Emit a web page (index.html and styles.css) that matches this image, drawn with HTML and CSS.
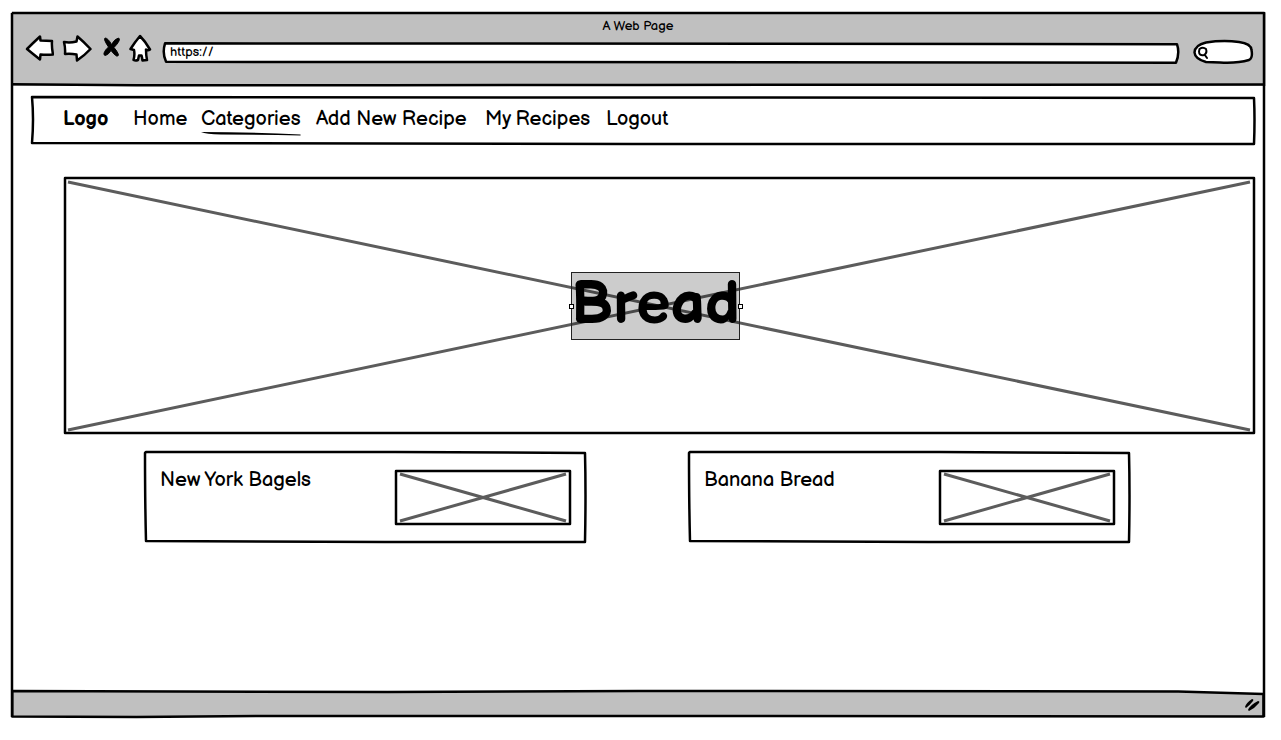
FILE: index.html
```html
<!DOCTYPE html>
<html lang="en">
<head>
<meta charset="utf-8">
<meta name="viewport" content="width=device-width, initial-scale=1">
<title>A Web Page</title>
<link rel="stylesheet" href="styles.css">
</head>
<body>
<div class="browser">
  <header class="chrome">
    <svg class="sketch" viewBox="0 0 1000 100" preserveAspectRatio="none" aria-hidden="true"><path d="M1 97.500 L100 99 L300 99 L500 98.500 L998 98"/></svg>
    <p class="chrome-title">A Web Page</p>
    <div class="toolbar">
      <button class="tool" type="button" aria-label="Back">
        <svg width="29" height="30" viewBox="0 0 29 30"><path d="M2 15 Q8 9 15 2.500 L15.500 6.500 L27 7 Q26.500 13 28 20.500 Q22 21 15.500 20.500 L15 25.500 Q8 20 2 15Z"/></svg>
      </button>
      <button class="tool" type="button" aria-label="Forward">
        <svg width="30" height="30" viewBox="0 0 30 30"><path d="M2 8 Q8 9 14.500 7.500 L15.500 2.500 Q22 8 28.500 15 Q23 21 15 26.500 L14.500 20.500 Q9 19.500 3 20 Q3.500 14 2 8Z"/></svg>
      </button>
      <button class="tool" type="button" aria-label="Stop">
        <svg width="21" height="30" viewBox="0 0 21 30"><path class="solid" d="M5 4 Q8 4 11.500 10.500 Q14.500 5 18.500 4 Q20 4.500 19 7 Q17.500 10 14 13.500 Q17 17 18.500 20.500 Q18.500 22.500 16.500 22 Q14 20.500 11 16.500 Q8.500 20.500 5.500 21.500 Q3.500 21.500 4 19 Q5 16 8.500 13 Q5 8 4.500 5.500Z"/></svg>
      </button>
      <button class="tool" type="button" aria-label="Home">
        <svg width="26" height="30" viewBox="0 0 26 30"><path d="M11 2 Q16 7 21 15.500 Q19 17 17 15.500 Q17 21 18 26 L13.500 26.500 Q13 23 12.500 21.500 L10 21.500 L9 26 Q6.500 27 4.500 26 Q6 21 5 16 L1.500 15 Q6 8 11 2Z"/></svg>
      </button>
      <div class="address">
        <svg class="sketch filled" viewBox="0 0 1000 100" preserveAspectRatio="none" aria-hidden="true"><path d="M2 6 L998 10 Q1001 50 997 94 L3 90 Q-1 50 2 6Z"/></svg>
        <input class="field" type="text" value="https://" aria-label="Address">
      </div>
      <div class="search">
        <svg class="search-shape" viewBox="0 0 61 26" aria-hidden="true"><path class="pill" d="M13 3.500 Q30 1 46 3 Q58 4.500 58.500 11 Q60 19 56 21 Q44 24.500 27 23.500 L13 23 Q2 20 1.500 13.500 Q2 6 13 3.500Z"/><path class="lens" d="M6.500 10 Q10 7.500 13 10 Q14.500 14 11 16 Q6 17 6 12.500Z M11.500 15.500 L14 19"/></svg>
        <input class="field" type="search" aria-label="Search">
      </div>
    </div>
  </header>

  <main class="page">
    <nav class="nav" aria-label="Main">
      <svg class="sketch" viewBox="0 0 1222 48" preserveAspectRatio="none" aria-hidden="true"><path d="M0 0 L1221 1 Q1222 22 1221 47 L600 47 L0 46 Q2 22 0 0Z"/></svg>
      <a class="logo" href="#">Logo</a>
      <a href="#">Home</a>
      <a class="current" href="#" aria-current="page">Categories<svg class="underline" viewBox="0 0 100 4" preserveAspectRatio="none" aria-hidden="true"><path d="M0 0 Q50 0 100 2.500 L100 3.500 Q60 2.500 20 2.500 Q5 2 0 0Z"/></svg></a>
      <a href="#">Add New Recipe</a>
      <a href="#">My Recipes</a>
      <a href="#">Logout</a>
    </nav>

    <section class="hero">
      <svg class="sketch" viewBox="0 0 1191 256" preserveAspectRatio="none" aria-hidden="true"><path class="cross" d="M4 4 L1186 252 M4 252 L1186 4"/><path d="M1 0 L1190 0 L1190 255 L1 255Z"/></svg>
      <div class="hero-label">
        <h1>Bread</h1>
        <span class="handle handle-left"></span>
        <span class="handle handle-right"></span>
      </div>
    </section>

    <section class="cards" aria-label="Recipes">
      <article class="card">
        <svg class="sketch" viewBox="0 0 441 91" preserveAspectRatio="none" aria-hidden="true"><path d="M1 0 L250 0 L440 1 Q441 40 440 90 L240 90 L1 89 Q0 50 0 1Z"/></svg>
        <h2>New York Bagels</h2>
        <div class="thumb"><svg class="sketch" viewBox="0 0 176 55" preserveAspectRatio="none" aria-hidden="true"><path class="cross" d="M5 4 L171 51 M5 51 L171 4"/><path d="M1 1 L175 1 L175 54 L1 54Z"/></svg></div>
      </article>
      <article class="card">
        <svg class="sketch" viewBox="0 0 441 91" preserveAspectRatio="none" aria-hidden="true"><path d="M1 0 L250 0 L440 1 Q441 40 440 90 L240 90 L1 89 Q0 50 0 1Z"/></svg>
        <h2>Banana Bread</h2>
        <div class="thumb"><svg class="sketch" viewBox="0 0 176 55" preserveAspectRatio="none" aria-hidden="true"><path class="cross" d="M5 4 L171 51 M5 51 L171 4"/><path d="M1 1 L175 1 L175 54 L1 54Z"/></svg></div>
      </article>
    </section>
  </main>

  <footer class="status">
    <svg class="sketch filled-grey" viewBox="0 0 1000 28" preserveAspectRatio="none" aria-hidden="true"><path d="M1 1 L300 2 L500 1 L930 1.500 L998 4 L998 26.500 L500 26 L200 26 L100 27 L1 26.500Z"/></svg>
    <svg class="grip" width="18" height="16" viewBox="0 0 18 16" aria-hidden="true"><path d="M2 11 Q3 7 9 3 Q11 3 10 5 Q6 10 3 12Z M5 14 Q7 9 15 5 Q17 5 16 7 Q12 12 6 15Z"/></svg>
  </footer>
  <svg class="sketch" viewBox="0 0 1255 706" preserveAspectRatio="none" aria-hidden="true"><path d="M1 1 L1253 1 L1253 300 L1253 705 M1 1 L1 300 L1 705"/></svg>
</div>
</body>
</html>
```
FILE: styles.css
```css
* {
  box-sizing: border-box;
}

body {
  margin: 0;
  background: #fff;
  color: #000;
  font-family: "Balsamiq Sans", "Liberation Sans", Arial, sans-serif;
  font-size: 20px;
  line-height: 24px;
}

h1, h2, p {
  margin: 0;
}

a {
  color: inherit;
  text-decoration: none;
}

/* Browser window */
.browser {
  position: relative;
  display: flex;
  flex-direction: column;
  min-height: calc(100vh - 34px);
  margin: 12px 15px 22px 11px;
}

.chrome {
  position: relative;
  padding: 6px 12px 18px 14px;
  background: #c0c0c0;
}

.chrome-title {
  padding-right: 3px;
  font-size: 13px;
  line-height: 16px;
  text-align: center;
}

.toolbar {
  display: flex;
  align-items: center;
  gap: 8px;
  height: 34px;
}

.tool {
  padding: 0 0 4px;
  border: 0;
  background: none;
  line-height: 0;
}

.tool path {
  fill: #fff;
  stroke: #000;
  stroke-width: 2.5;
  stroke-linejoin: round;
}

.tool .solid {
  fill: #000;
  stroke: #000;
  stroke-width: 1;
}

/* Hand-drawn outlines stretched over their box */
.sketch {
  position: absolute;
  inset: 0;
  width: 100%;
  height: 100%;
  overflow: visible;
  pointer-events: none;
}

.sketch path {
  fill: none;
  stroke: #000;
  stroke-width: 2.5px;
  stroke-linejoin: round;
  vector-effect: non-scaling-stroke;
}

.filled path {
  fill: #fff;
}

.filled-grey path {
  fill: #c0c0c0;
}

.sketch .cross {
  stroke: #5c5c5c;
  stroke-width: 3px;
}

.address {
  position: relative;
  flex: 1;
  height: 22px;
  margin-top: 4px;
}

.field {
  position: relative;
  display: block;
  width: 100%;
  height: 20px;
  padding: 0 7px;
  border: 0;
  outline: 0;
  background: none;
  color: #000;
  font-family: inherit;
  font-size: 13px;
}

.search {
  position: relative;
  width: 61px;
  height: 26px;
  margin: 2px 0 0 6px;
}

.search-shape {
  position: absolute;
  inset: 0;
}

.search .field {
  padding-left: 18px;
}

.pill {
  fill: #fff;
  stroke: #000;
  stroke-width: 2.5;
}

.lens {
  fill: none;
  stroke: #000;
  stroke-width: 2;
  stroke-linecap: round;
}

/* Page */
.page {
  flex: 1;
  padding: 11px 11px 24px 21px;
}

.nav {
  position: relative;
  display: grid;
  grid-template-columns: 70px 68px 115px 169px 121px auto;
  padding: 10px 31px 14px;
}

.nav a {
  justify-self: start;
  white-space: nowrap;
}

.logo {
  font-weight: 700;
}

.current {
  position: relative;
}

.underline {
  position: absolute;
  left: 0;
  bottom: -5px;
  width: 100%;
  height: 4px;
}

.hero {
  position: relative;
  display: grid;
  place-items: center;
  min-height: 256px;
  margin: 33px 0 0 32px;
  padding-right: 8px;
}

.hero-label {
  position: relative;
  min-height: 68px;
  border: 1px solid #222;
  background: rgba(0, 0, 0, 0.2);
}

.hero-label h1 {
  margin: 0 -1px;
  font-size: 60px;
  line-height: 64px;
}

.handle {
  position: absolute;
  top: 50%;
  width: 5px;
  height: 5px;
  margin-top: -2px;
  border: 1px solid #000;
  background: #fff;
}

.handle-left {
  left: -3px;
}

.handle-right {
  right: -4px;
}

.cards {
  display: grid;
  grid-template-columns: 1fr 1fr;
  gap: 103px;
  margin: 18px 125px 0 113px;
}

.card {
  position: relative;
  display: flex;
  justify-content: space-between;
  padding: 18px 15px;
}

.card h2 {
  margin-top: -2px;
  font-size: 20px;
  font-weight: 400;
}

.thumb {
  position: relative;
  width: 176px;
  height: 55px;
}

/* Status bar */
.status {
  position: relative;
  display: flex;
  align-items: center;
  justify-content: flex-end;
  height: 28px;
  padding-right: 5px;
}

.grip {
  position: relative;
}
```
